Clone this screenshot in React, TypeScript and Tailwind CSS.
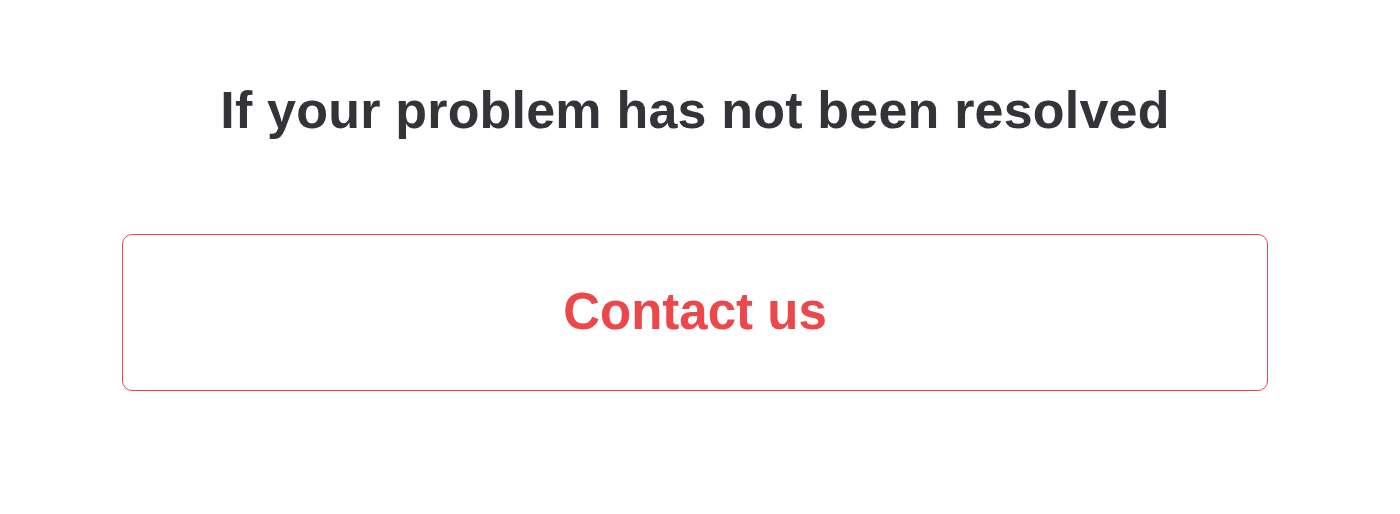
export default function App() {
  return (
    <div className="min-h-[514px] bg-white font-['Liberation_Sans',Arial,sans-serif]">
      <div className="pl-[122px] pr-[132px] pt-[80px]">
        <h2 className="text-center text-[52px] leading-[60px] font-bold tracking-[0.2px] text-[#333338]">If your problem has not been resolved</h2>
        <button className="mt-[94px] flex h-[157px] w-full items-center justify-center rounded-[10px] border border-[#ec474b] bg-white">
          <span className="text-[51px] font-bold text-[#ec474b]">Contact us</span>
        </button>
      </div>
    </div>
  );
}
